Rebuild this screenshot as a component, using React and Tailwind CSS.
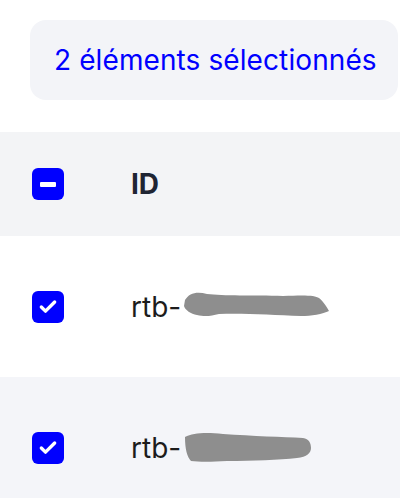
import { Check } from 'lucide-react'

const font = { fontFamily: 'Inter, "Noto Sans", sans-serif' }

function Box({ mode }) {
  return (
    <span className="flex h-8 w-8 shrink-0 items-center justify-center rounded-[6px] bg-[#0000ff]">
      {mode === 'some' ? (
        <span className="block h-[5px] w-4 rounded-[1px] bg-white" />
      ) : (
        <Check className="h-5 w-5 text-white" strokeWidth={4} />
      )}
    </span>
  )
}

// grey scribble that hides the rest of the id
function Blot({ w, d }) {
  return (
    <svg width={w} height="34" viewBox={`0 0 ${w} 34`} className="ml-[2px] shrink-0">
      <path d={d} fill="#8e8e8e" />
    </svg>
  )
}

const rows = [
  {
    bg: 'bg-white',
    w: 148,
    d: 'M2 10 C6 3 14 1 24 4 C40 6 70 5 100 6 C120 5 132 5 136 8 C140 11 144 17 146 21 C140 24 128 26 118 26 C90 25 60 23 36 24 C28 26 22 27 14 25 C8 24 2 20 1 16 Z',
  },
  {
    bg: 'bg-[#f4f5f9]',
    w: 130,
    d: 'M2 6 C10 2 22 1 40 3 C70 5 100 6 120 7 C126 8 128 12 128 17 C128 22 124 26 114 27 C96 29 70 30 44 30 C28 31 16 31 8 30 C4 26 2 18 2 6 Z',
  },
]

export default function App() {
  return (
    <div className="w-[400px] h-[498px] overflow-hidden bg-white" style={font}>
      <div className="pt-5 pl-[30px]">
        <div className="inline-flex h-20 items-center whitespace-nowrap rounded-2xl bg-[#f3f4f8] pl-6 pr-[21px] text-[28px] tracking-[0.1px] text-[#0000ff]">
          2 éléments sélectionnés
        </div>
      </div>

      <div className="mt-8">
        <div className="flex h-[104px] items-center bg-[#f3f4f6] pl-8">
          <Box mode="some" />
          <span className="ml-[67px] text-[28px] font-bold text-[#1f2533]">ID</span>
        </div>
        {rows.map((r, i) => (
          <div key={i} className={`flex h-[141px] items-center pl-8 ${r.bg}`}>
            <Box mode="all" />
            <span className="ml-[67px] flex items-center">
              <span className="text-[28px] text-[#1c1c1c]">rtb-</span>
              <Blot w={r.w} d={r.d} />
            </span>
          </div>
        ))}
      </div>
    </div>
  )
}
